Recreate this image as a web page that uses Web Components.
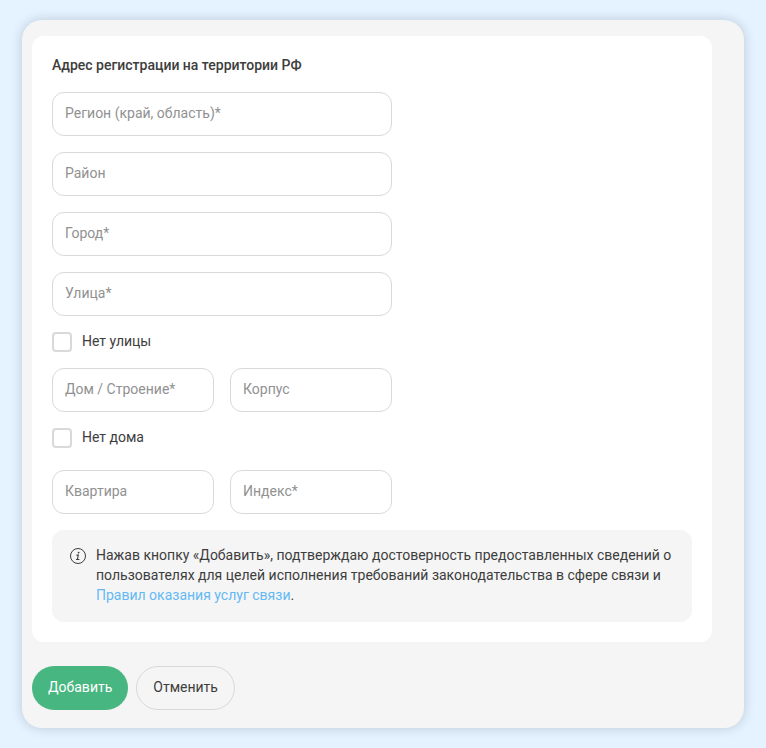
<!DOCTYPE html>
<html lang="ru">
<head>
  <meta charset="UTF-8">
  <meta name="viewport" content="width=device-width, initial-scale=1">
  <title>Адрес регистрации</title>
  <style>
    body {
      margin: 0;
      padding: 20px 22px;
      background-color: #e5f2ff;
      color: #3d3d3d;
      font: 14px/20px Roboto, "Liberation Sans", sans-serif;
    }
  </style>
</head>
<body>
  <uc-dialog>
    <uc-card>
      <span slot="title">Адрес регистрации на территории РФ</span>
      <uc-field>Регион (край, область)*</uc-field>
      <uc-field>Район</uc-field>
      <uc-field>Город*</uc-field>
      <uc-field>Улица*</uc-field>
      <uc-checkbox>Нет улицы</uc-checkbox>
      <uc-row>
        <uc-field>Дом / Строение*</uc-field>
        <uc-field>Корпус</uc-field>
      </uc-row>
      <uc-checkbox>Нет дома</uc-checkbox>
      <uc-row spaced>
        <uc-field>Квартира</uc-field>
        <uc-field>Индекс*</uc-field>
      </uc-row>
      <uc-note>Нажав кнопку «Добавить», подтверждаю достоверность предоставленных сведений о пользователях для целей исполнения требований законодательства в сфере связи и <uc-link href="#">Правил оказания услуг связи</uc-link>.</uc-note>
    </uc-card>
    <uc-button slot="actions" primary>Добавить</uc-button>
    <uc-button slot="actions">Отменить</uc-button>
  </uc-dialog>

  <script>
    class Dialog extends HTMLElement {
      constructor() {
        super();
        this.attachShadow({ mode: 'open' });
        this.shadowRoot.innerHTML = `
          <style>
            :host {
              display: block;
              box-sizing: border-box;
              width: 722px;
              height: 708px;
              padding: 16px 32px 18px 10px;
              border-radius: 20px;
              background-color: #f5f5f5;
              box-shadow: 0 0 12px rgba(0, 30, 40, 0.19);
            }
            footer {
              display: flex;
              gap: 8px;
              margin-top: 24px;
            }
          </style>
          <slot></slot>
          <footer><slot name="actions"></slot></footer>
        `;
      }
    }

    class Card extends HTMLElement {
      constructor() {
        super();
        this.attachShadow({ mode: 'open' });
        this.shadowRoot.innerHTML = `
          <style>
            :host {
              display: flex;
              flex-direction: column;
              gap: 16px;
              padding: 20px;
              border-radius: 12px;
              background-color: #fff;
            }
            h2 {
              margin: -1px 0 1px;
              font-size: 14px;
              font-weight: 500;
              line-height: 20px;
            }
          </style>
          <h2><slot name="title"></slot></h2>
          <slot></slot>
        `;
      }
    }

    class Row extends HTMLElement {
      constructor() {
        super();
        this.attachShadow({ mode: 'open' });
        this.shadowRoot.innerHTML = `
          <style>
            :host {
              display: grid;
              grid-template-columns: 1fr 1fr;
              gap: 16px;
              width: 340px;
            }
            :host([spaced]) {
              margin-top: 6px;
            }
          </style>
          <slot></slot>
        `;
      }
    }

    class Field extends HTMLElement {
      constructor() {
        super();
        this.attachShadow({ mode: 'open' });
        // the input lies over its label, the label is hidden as soon as there is a value
        this.shadowRoot.innerHTML = `
          <style>
            :host {
              display: block;
              position: relative;
              box-sizing: border-box;
              width: 100%;
              max-width: 340px;
              height: 44px;
              padding: 10px 12px 12px;
              border: 1px solid #d9d9d9;
              border-radius: 12px;
              background-color: #fff;
            }
            label {
              display: block;
              color: #919191;
            }
            input {
              position: absolute;
              inset: 0;
              box-sizing: border-box;
              width: 100%;
              padding: 0 12px;
              border: 0;
              outline: 0;
              background: none;
              color: inherit;
              font: inherit;
            }
            .filled {
              visibility: hidden;
            }
          </style>
          <label for="value"><slot></slot></label>
          <input id="value" type="text">
        `;
      }

      connectedCallback() {
        const label = this.shadowRoot.querySelector('label');
        const input = this.shadowRoot.querySelector('input');
        input.addEventListener('input', () => {
          label.classList.toggle('filled', input.value !== '');
        });
      }
    }

    class Checkbox extends HTMLElement {
      constructor() {
        super();
        this.attachShadow({ mode: 'open' });
        this.shadowRoot.innerHTML = `
          <style>
            :host {
              display: block;
              height: 20px;
            }
            label {
              display: inline-flex;
              gap: 10px;
            }
            input {
              appearance: none;
              box-sizing: border-box;
              width: 20px;
              height: 20px;
              margin: 0;
              border: 2px solid #d9d9d9;
              border-radius: 4px;
              background-color: #fff;
            }
            input:checked {
              border-color: #48b681;
              background-color: #48b681;
            }
            span {
              margin-top: -1px;
            }
          </style>
          <label><input type="checkbox"><span><slot></slot></span></label>
        `;
      }
    }

    class Note extends HTMLElement {
      constructor() {
        super();
        this.attachShadow({ mode: 'open' });
        this.shadowRoot.innerHTML = `
          <style>
            :host {
              display: flex;
              gap: 9px;
              box-sizing: border-box;
              height: 92px;
              padding: 15px 16px 17px 17px;
              border-radius: 12px;
              background-color: #f5f5f5;
            }
            svg {
              flex: none;
              margin-top: 2px;
            }
            p {
              margin: 0;
            }
          </style>
          <svg width="18" height="18" viewBox="0 0 18 18" fill="none" stroke="#3d3d3d">
            <circle cx="9" cy="9" r="7.5"/>
            <circle cx="9.6" cy="5.6" r="0.9" fill="#3d3d3d" stroke="none"/>
            <path d="M7.4 8.1h1.9l-.9 4.2M7 12.5h3.4" stroke-width="1.1"/>
          </svg>
          <p><slot></slot></p>
        `;
      }
    }

    class Link extends HTMLElement {
      constructor() {
        super();
        this.attachShadow({ mode: 'open' });
        // no whitespace after the anchor, it would show before the next character
        this.shadowRoot.innerHTML = `
          <style>
            :host {
              display: inline;
            }
            a {
              color: #64b9f4;
              text-decoration: none;
            }
          </style>
          <a><slot></slot></a>`;
      }

      connectedCallback() {
        this.shadowRoot.querySelector('a').href = this.getAttribute('href');
      }
    }

    class Button extends HTMLElement {
      constructor() {
        super();
        this.attachShadow({ mode: 'open' });
        this.shadowRoot.innerHTML = `
          <style>
            :host {
              display: block;
            }
            button {
              box-sizing: border-box;
              height: 44px;
              padding: 0 16px 2px;
              border: 1px solid #d9d9d9;
              border-radius: 22px;
              background: none;
              color: inherit;
              font: inherit;
              cursor: pointer;
            }
            :host([primary]) button {
              min-width: 96px;
              border: 0;
              background-color: #48b681;
              color: #fff;
            }
          </style>
          <button type="button"><slot></slot></button>
        `;
      }
    }

    customElements.define('uc-dialog', Dialog);
    customElements.define('uc-card', Card);
    customElements.define('uc-row', Row);
    customElements.define('uc-field', Field);
    customElements.define('uc-checkbox', Checkbox);
    customElements.define('uc-note', Note);
    customElements.define('uc-link', Link);
    customElements.define('uc-button', Button);
  </script>
</body>
</html>
